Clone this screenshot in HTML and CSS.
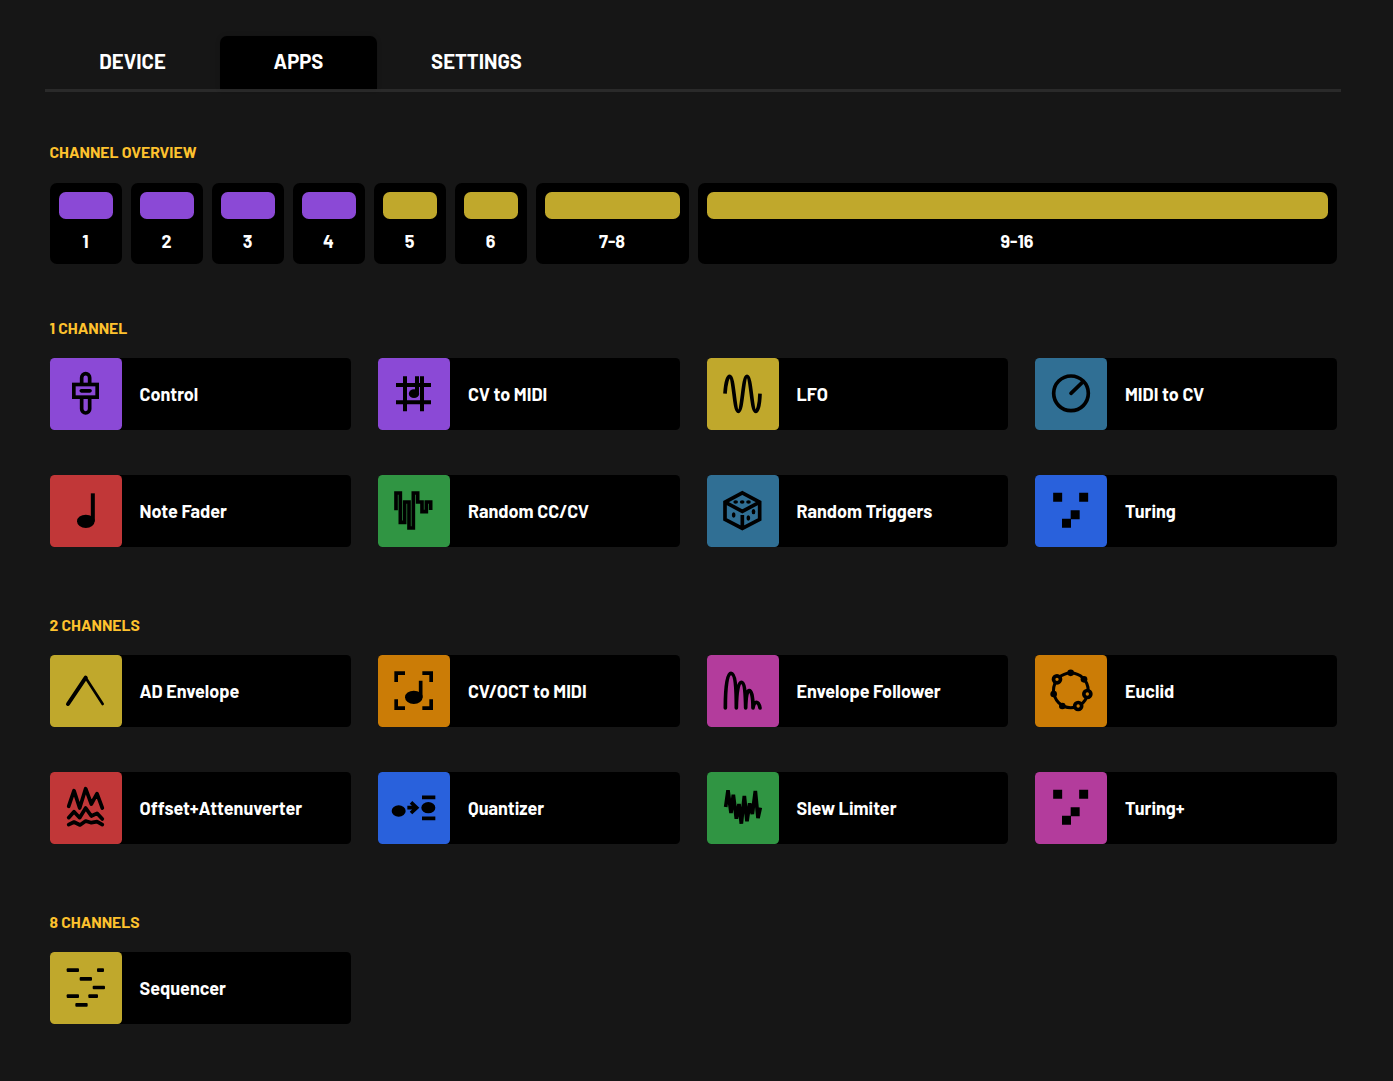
FILE: index.html
```html
<!DOCTYPE html>
<html lang="en">
<head>
<meta charset="utf-8">
<title>Apps</title>
<link rel="stylesheet" href="styles.css">
</head>
<body>
<main class="page">
  <nav class="tabs">
    <a class="tab tab-device"><span>DEVICE</span></a>
    <a class="tab tab-active"><span>APPS</span></a>
    <a class="tab tab-settings"><span>SETTINGS</span></a>
  </nav>

  <section class="section overview">
    <h2 class="heading">CHANNEL OVERVIEW</h2>
    <div class="channels">
      <div class="channel"><div class="bar purple"></div><span>1</span></div>
      <div class="channel"><div class="bar purple"></div><span>2</span></div>
      <div class="channel"><div class="bar purple"></div><span>3</span></div>
      <div class="channel"><div class="bar purple"></div><span>4</span></div>
      <div class="channel"><div class="bar yellow"></div><span>5</span></div>
      <div class="channel"><div class="bar yellow"></div><span>6</span></div>
      <div class="channel span-2"><div class="bar yellow"></div><span>7-8</span></div>
      <div class="channel span-8"><div class="bar yellow"></div><span>9-16</span></div>
    </div>
  </section>

  <section class="section">
    <h2 class="heading">1 CHANNEL</h2>
    <div class="apps">
      <div class="app"><div class="tile purple"><svg class="icon" viewBox="0 1 216 216"><rect x="95" y="48" width="24" height="118" rx="12"/><rect class="knob" x="71.500" y="80.500" width="70" height="38"/><path class="round" d="M94 99.500H120"/></svg></div><span class="name">Control</span></div>
      <div class="app"><div class="tile purple"><svg class="icon" viewBox="0 1 216 216"><path class="thick" d="M81 56V161M132 56V161M54 82H159M54 133.500H159M117 56V108"/><ellipse class="solid" cx="108" cy="108" rx="15.500" ry="13"/></svg></div><span class="name">CV to MIDI</span></div>
      <div class="app"><div class="tile yellow"><svg class="icon" viewBox="0 1 216 216"><path d="M54 108C56 76 62 56 68 56C81 56 81 161 94 161C107 161 107 56 120 56C133 56 133 161 146 161C153 161 158 140 159 108"/></svg></div><span class="name">LFO</span></div>
      <div class="app"><div class="tile teal"><svg class="icon" viewBox="0 1 216 216"><circle cx="108" cy="107" r="52"/><path class="round" d="M108 107L142 74"/></svg></div><span class="name">MIDI to CV</span></div>
      <div class="app"><div class="tile red"><svg class="icon" viewBox="0 1 216 216"><ellipse class="solid" cx="107.500" cy="140" rx="26.500" ry="20"/><path class="thick" d="M128.500 56V140"/></svg></div><span class="name">Note Fader</span></div>
      <div class="app"><div class="tile green"><svg class="icon" viewBox="0 1 216 216"><path d="M54 107V55H67V143H80V82H93V160H106V55H119V82H132V111H145V82H158V106"/></svg></div><span class="name">Random CC/CV</span></div>
      <div class="app"><div class="tile teal"><svg class="icon" viewBox="0 1 216 216"><path d="M106 54.500L158 82.500V134L106 161L54 134V82.500ZM54 82.500L106 110L158 82.500M106 121V161"/><g class="solid"><ellipse cx="86" cy="82" rx="7" ry="5.500"/><ellipse cx="105.500" cy="82" rx="7" ry="5.500"/><ellipse cx="124.500" cy="82" rx="7" ry="5.500"/><ellipse cx="80" cy="121" rx="5.500" ry="8"/><ellipse cx="124" cy="130" rx="5.500" ry="8"/><ellipse cx="139.500" cy="111" rx="5.500" ry="8"/></g></svg></div><span class="name">Random Triggers</span></div>
      <div class="app"><div class="tile blue"><svg class="icon" viewBox="0 1 216 216"><path class="solid" d="M54.500 54.500h27v27h-27zM132.500 54.500h27v27h-27zM107 106.500h27v27h-27zM81 132.500h27v27h-27z"/></svg></div><span class="name">Turing</span></div>
    </div>
  </section>

  <section class="section">
    <h2 class="heading">2 CHANNELS</h2>
    <div class="apps">
      <div class="app"><div class="tile yellow"><svg class="icon" viewBox="0 1 216 216"><path class="attack" d="M54 148L107 69"/><path class="decay" d="M107 69L158 148"/></svg></div><span class="name">AD Envelope</span></div>
      <div class="app"><div class="tile orange"><svg class="icon" viewBox="0 1 216 216"><path d="M54.500 82V55.500H81M133 55.500H159.500V82M159.500 134V160.500H133M81 160.500H54.500V134M128 78V128"/><ellipse class="solid" cx="107.500" cy="128" rx="26.500" ry="20"/></svg></div><span class="name">CV/OCT to MIDI</span></div>
      <div class="app"><div class="tile pink"><svg class="icon" viewBox="0 1 216 216"><path class="round" d="M55 160C55 96 60 56 72 56C84 56 88 96 88 160C89 108 94 83 103 83C112 83 115 108 116 160C117 125 120 108 127 108C134 108 138 128 138 160C140 149 143 143 148 143C153 143 157 150 159 160"/></svg></div><span class="name">Envelope Follower</span></div>
      <div class="app"><div class="tile orange"><svg class="icon" viewBox="0 1 216 216"><circle class="orbit" cx="107.500" cy="107" r="52"/><g class="solid"><circle cx="107" cy="54.500" r="10"/><circle cx="147" cy="74" r="10"/><circle cx="56" cy="118" r="10"/><circle cx="82" cy="154" r="10"/></g><g class="knob"><circle cx="66" cy="74" r="10.500"/><circle cx="157" cy="118" r="10.500"/><circle cx="129.500" cy="154" r="10.500"/></g></svg></div><span class="name">Euclid</span></div>
      <div class="app"><div class="tile red"><svg class="icon" viewBox="0 1 216 216"><path class="round" d="M56 104L72 57L89 109L107 51L124 97L141 66L157 109M56 138L72 120L89 138L107 109L124 133L141 125L157 142M56 159L72 151L90 160L107 148L124 153L141 150L157 159"/></svg></div><span class="name">Offset+Attenuverter</span></div>
      <div class="app"><div class="tile blue"><svg class="icon" viewBox="0 1 216 216"><path d="M132 77H172M132 140H172M88 108H115M99 92L116 108L99 124"/><ellipse class="solid" cx="62" cy="118" rx="21" ry="17"/><ellipse class="solid" cx="151" cy="108" rx="21" ry="17"/></svg></div><span class="name">Quantizer</span></div>
      <div class="app"><div class="tile green"><svg class="icon" viewBox="0 1 216 216"><path class="bevel" d="M56 106L63 56L72 124L79 69L88 141L96 97L103 156L112 73L120 149L128 95L136 127L145 58L153 139L160 108"/></svg></div><span class="name">Slew Limiter</span></div>
      <div class="app"><div class="tile pink"><svg class="icon" viewBox="0 1 216 216"><path class="solid" d="M54.500 54.500h27v27h-27zM132.500 54.500h27v27h-27zM107 106.500h27v27h-27zM81 132.500h27v27h-27z"/></svg></div><span class="name">Turing+</span></div>
    </div>
  </section>

  <section class="section">
    <h2 class="heading">8 CHANNELS</h2>
    <div class="apps">
      <div class="app"><div class="tile yellow"><svg class="icon" viewBox="0 1 216 216"><g class="solid"><rect x="50" y="50" width="37" height="11" rx="3"/><rect x="141" y="50" width="21" height="11" rx="3"/><rect x="89" y="76" width="37" height="11" rx="3"/><rect x="128" y="102" width="37" height="11" rx="3"/><rect x="50" y="128" width="37" height="11" rx="3"/><rect x="115" y="128" width="29" height="11" rx="3"/><rect x="76" y="154" width="37" height="11" rx="3"/></g></svg></div><span class="name">Sequencer</span></div>
    </div>
  </section>
</main>
</body>
</html>
```
FILE: styles.css
```css
* { box-sizing: border-box; }

body {
  margin: 0;
  min-height: 100vh;
  background: #161616;
  color: #fff;
  font-family: Barlow, Roboto, sans-serif;
  font-weight: 700;
}

.page { padding: 36px 52px 0 45px; }

.tabs {
  display: flex;
  height: 56px;
  border-bottom: 3px solid #2a2a2a;
}

.tab {
  display: flex;
  align-items: center;
  justify-content: center;
  width: 175px;
  padding-bottom: 3px;
  font-size: 20.250px;
  line-height: 27px;
}

.tab-active {
  width: 157px;
  border-radius: 7px 7px 0 0;
  background: #000;
  box-shadow: 0 0 5px rgba(0, 0, 0, 0.15);
}

.tab-settings { width: 199px; }

.section { padding: 0 4.500px; }

.overview { padding-top: 47px; }

.section + .section { padding-top: 51px; }

.section + .section ~ .section { padding-top: 64.500px; }

.heading {
  margin: 0;
  color: #fec22e;
  font-size: 15.750px;
  font-weight: 700;
  line-height: 25px;
}

.channels {
  display: grid;
  grid-template-columns: repeat(16, 72px);
  gap: 9px;
  margin-top: 18.500px;
}

.channel {
  display: flex;
  flex-direction: column;
  align-items: center;
  gap: 9px;
  height: 81px;
  padding: 9px;
  border-radius: 7px;
  background: #000;
  font-size: 18px;
  line-height: 27px;
}

.span-2 { grid-column: span 2; }
.span-8 { grid-column: span 8; width: 639px; }

.bar {
  width: 100%;
  height: 27px;
  border-radius: 6.750px;
}

.apps {
  display: grid;
  grid-template-columns: repeat(4, 1fr);
  gap: 45px 27px;
  margin-top: 18.500px;
}

.app {
  display: flex;
  align-items: center;
  gap: 18px;
  height: 72px;
  border-radius: 4.500px;
  background: #000;
}

.tile {
  flex: none;
  width: 72px;
  height: 72px;
  border-radius: 4.500px;
  background: var(--color);
}

.name {
  font-size: 18px;
  line-height: 27px;
  white-space: nowrap;
}

.purple { --color: #8b49d6; }
.yellow { --color: #c0a82c; }
.teal { --color: #306f94; }
.red { --color: #c13738; }
.green { --color: #309543; }
.blue { --color: #2961dc; }
.orange { --color: #cb7c06; }
.pink { --color: #b33c9c; }

.bar { background: var(--color); }

.icon {
  display: block;
  width: 100%;
  height: 100%;
  fill: none;
  stroke: #000;
  stroke-width: 11;
}

.icon .solid { fill: #000; stroke: none; }
.icon .knob { fill: var(--color); }
.icon .thick { stroke-width: 12; }
.icon .round { stroke-linecap: round; stroke-linejoin: round; }
.icon .bevel { stroke-linejoin: bevel; }
.icon .orbit { stroke-width: 9; }
.icon .attack { stroke-width: 12; stroke-linecap: round; }
.icon .decay { stroke-width: 8; stroke-linecap: round; }
```
